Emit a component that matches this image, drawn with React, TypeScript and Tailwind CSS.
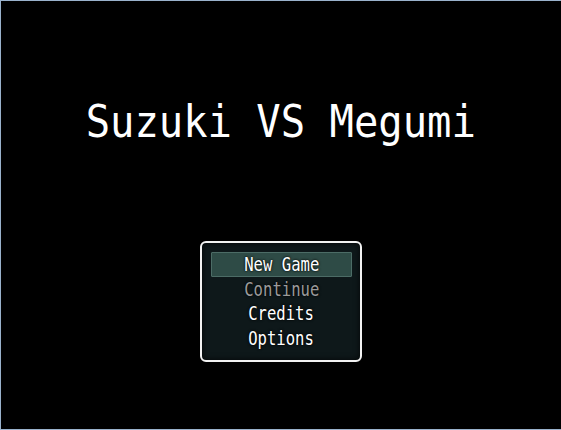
const items = [
  { label: 'New Game', enabled: true },
  { label: 'Continue', enabled: false },
  { label: 'Credits', enabled: true },
  { label: 'Options', enabled: true },
]

const font = "font-['DejaVu_Sans_Mono',monospace]"
const outline = '[text-shadow:0_0_2px_rgba(0,0,0,0.9),0_0_3px_rgba(0,0,0,0.7)]'

export default function App() {
  return (
    <main className="flex h-[430px] w-[561px] flex-col items-center border-t border-l border-b border-[#9ab2cc] bg-black">
      <h1
        className={`mt-[98px] h-[45px] origin-center scale-x-[0.9] whitespace-nowrap text-[45px] leading-[45px] text-white ${font} ${outline}`}
      >
        Suzuki VS Megumi
      </h1>

      <div className="mt-[97px] flex h-[121px] w-[162px] flex-col rounded-[6px] border-2 border-[#f2f2f2] bg-[#0e181a] pt-[9px] pl-[9px] pr-[8px] shadow-[inset_0_0_6px_rgba(0,0,0,0.8)]">
        {items.map((item, i) => (
          <div
            key={item.label}
            className={`flex h-[24.5px] items-center justify-center ${
              i === 0 ? 'rounded-[1px] border border-[#4c6c66] bg-[#2e4b46]' : 'border border-transparent'
            }`}
          >
            <span
              className={`scale-x-[0.82] whitespace-nowrap text-[19px] leading-[24px] ${font} ${outline} ${
                item.enabled ? 'text-white' : 'text-[#9b9b9b]'
              }`}
            >
              {item.label}
            </span>
          </div>
        ))}
      </div>
    </main>
  )
}
